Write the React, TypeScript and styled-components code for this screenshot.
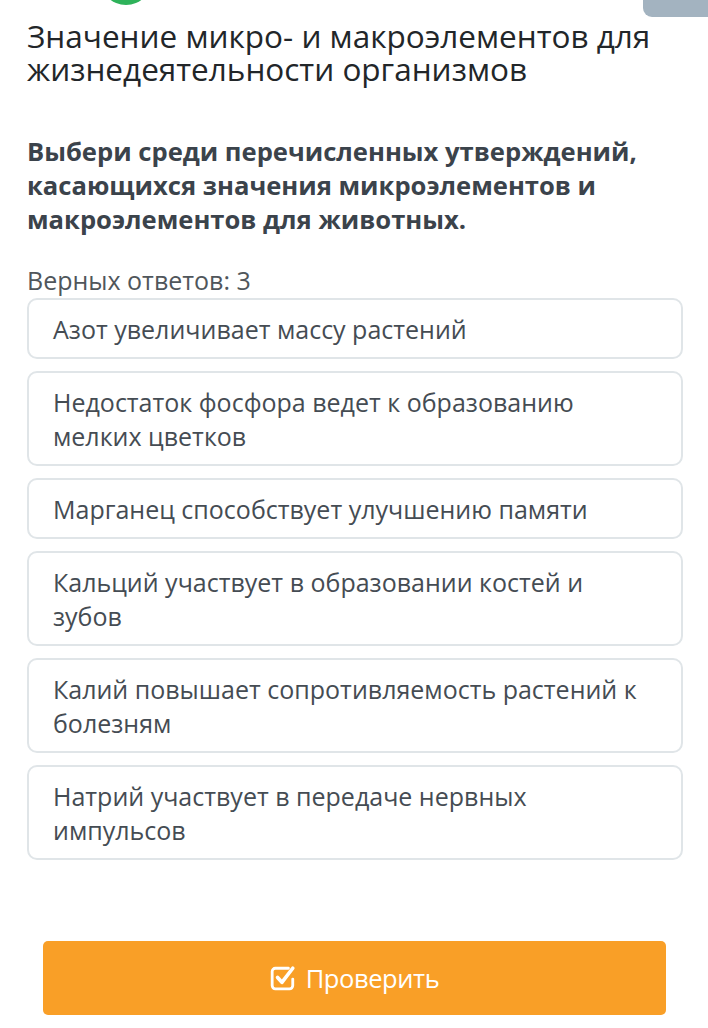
import styled, { createGlobalStyle } from "styled-components";

const GlobalStyle = createGlobalStyle`
  html, body {
    margin: 0;
    padding: 0;
    background: #ffffff;
    font-family: "Open Sans", "Noto Sans", sans-serif;
  }
`;

const options = [
  "Азот увеличивает массу растений",
  "Недостаток фосфора ведет к образованию мелких цветков",
  "Марганец способствует улучшению памяти",
  "Кальций участвует в образовании костей и зубов",
  "Калий повышает сопротивляемость растений к болезням",
  "Натрий участвует в передаче нервных импульсов",
];

export default function App() {
  return (
    <>
      <GlobalStyle />
      <Page>
        <TopBar>
          <Avatar />
          <CornerTab />
        </TopBar>
        <Title>Значение микро- и макроэлементов для жизнедеятельности организмов</Title>
        <Question>
          Выбери среди перечисленных утверждений, касающихся значения микроэлементов и
          макроэлементов для животных.
        </Question>
        <Hint>Верных ответов: 3</Hint>
        <List>
          {options.map((o) => (
            <Option key={o}>{o}</Option>
          ))}
        </List>
        <Footer>
          <CheckButton>
            <svg width="26" height="26" viewBox="0 0 24 24" fill="none">
              <path d="M17 3H5a3 3 0 0 0-3 3v13a3 3 0 0 0 3 3h13a3 3 0 0 0 3-3v-6" stroke="#fff" strokeWidth="2.6" strokeLinecap="round" />
              <path d="M7 11.5l4 4.5 10-13" stroke="#fff" strokeWidth="3.4" strokeLinecap="round" strokeLinejoin="round" />
            </svg>
            Проверить
          </CheckButton>
        </Footer>
      </Page>
    </>
  );
}

const Page = styled.div`
  width: 708px;
  height: 1028px;
  overflow: hidden;
  display: flex;
  flex-direction: column;
`;

const TopBar = styled.div`
  height: 17px;
  display: flex;
  justify-content: space-between;
  align-items: flex-end;
  padding-left: 100px;
`;

const Avatar = styled.div`
  width: 52px;
  height: 52px;
  border-radius: 50%;
  background: #2eb25a;
  align-self: flex-start;
  margin-top: -47px;
`;

const CornerTab = styled.div`
  width: 65px;
  height: 17px;
  background: #a3b3c0;
  border-bottom-left-radius: 9px;
`;

const Title = styled.h1`
  margin: 0;
  padding: 0 20px 0 27px;
  font-size: 31.5px;
  font-weight: 400;
  line-height: 33px;
  color: #222629;
  margin-top: 2px;
`;

const Question = styled.p`
  margin: 50px 0 0;
  padding: 0 20px 0 27px;
  font-size: 25.6px;
  font-weight: 700;
  line-height: 34px;
  color: #3b434b;
`;

const Hint = styled.div`
  margin-top: 29px;
  padding: 0 27px;
  font-size: 25px;
  line-height: 28px;
  color: #50565b;
`;

const List = styled.div`
  margin: 4px 25px 0 27px;
  display: flex;
  flex-direction: column;
  gap: 12px;
`;

const Option = styled.div`
  border: 2px solid #e0e5e8;
  border-radius: 10px;
  padding: 12px 36px 11px 24px;
  font-size: 25px;
  line-height: 34px;
  color: #454c53;
`;

const Footer = styled.div`
  margin-top: 81px;
  padding: 0 42px 0 43px;
`;

const CheckButton = styled.button`
  width: 100%;
  height: 74px;
  border: none;
  border-radius: 5px;
  background: #f99f27;
  color: #ffffff;
  font-family: "Open Sans", "Noto Sans", sans-serif;
  font-size: 25.5px;
  display: flex;
  align-items: center;
  justify-content: center;
  gap: 10px;
  letter-spacing: -0.4px;
  cursor: pointer;
`;
